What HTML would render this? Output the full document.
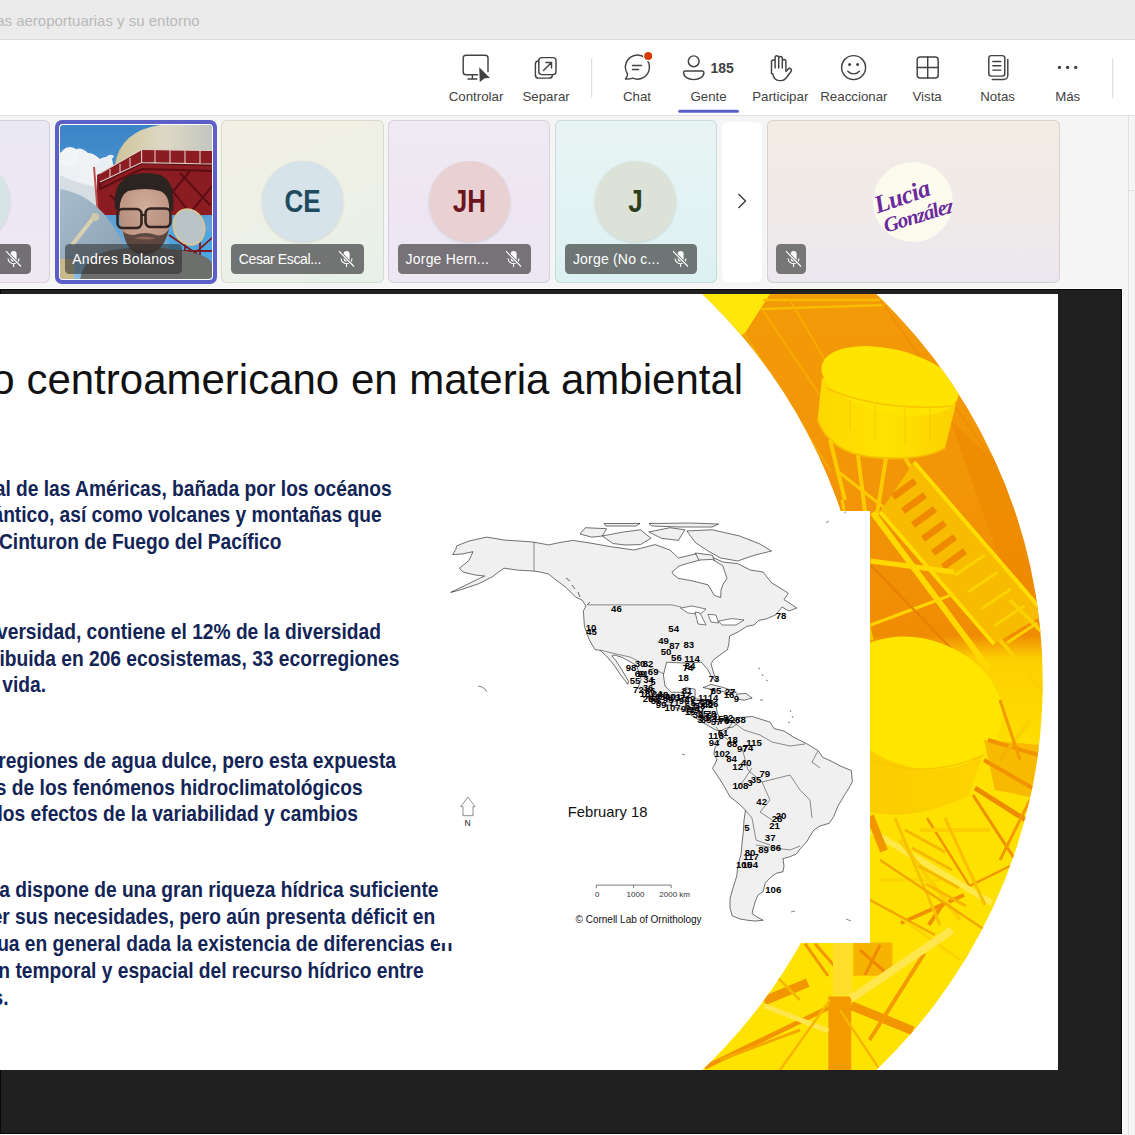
<!DOCTYPE html>
<html><head><meta charset="utf-8">
<style>
*{margin:0;padding:0;box-sizing:border-box}
html,body{width:1135px;height:1135px;overflow:hidden;background:#f5f5f5;font-family:"Liberation Sans",sans-serif}
.a{position:absolute}
.t{position:absolute;line-height:0;white-space:nowrap}
#titlebar{left:0;top:0;width:1135px;height:40px;background:#ebebeb;border-bottom:1px solid #dadada}
#toolbar{left:0;top:40px;width:1135px;height:76px;background:#fff;border-bottom:1px solid #e1e1e1}
.lbl{font-size:13.3px;color:#424242;margin-top:.8px}
.tile{position:absolute;top:120.3px;height:163.2px;border-radius:6px;overflow:hidden}
.av{position:absolute;width:81px;height:81px;border-radius:50%;top:40.6px;box-shadow:0 1px 3px rgba(0,0,0,.12)}
.avt{position:absolute;left:0;width:81px;top:41px;line-height:0;text-align:center;font-size:31px;transform:scaleX(.84)}
.pill{position:absolute;top:123.7px;height:29.7px;border-radius:4.5px}
.nm{position:absolute;left:7.6px;top:15px;line-height:0;font-size:14px;letter-spacing:-.35px;color:#fff;white-space:nowrap}
.mic{position:absolute;top:6px;width:18px;height:18px}
.body{font-size:22px;font-weight:700;color:#132456;transform:scaleX(.872);transform-origin:100% 0}
</style></head><body>
<!-- title bar -->
<div id="titlebar" class="a"></div>
<div class="t" style="right:935.4px;top:20.6px;font-size:15px;color:#b9b9b9">as aeroportuarias y su entorno</div>

<!-- toolbar -->
<div id="toolbar" class="a"></div>
<svg class="a" style="left:0;top:0" width="1135" height="116" viewBox="0 0 1135 116">
 <g fill="none" stroke="#424242" stroke-width="1.45" stroke-linecap="round" stroke-linejoin="round">
  <!-- Controlar -->
  <path d="M477.6 74.7H466a2.8 2.8 0 0 1-2.8-2.8V58.1a2.8 2.8 0 0 1 2.8-2.8H485.2a2.8 2.8 0 0 1 2.8 2.8V71.6"/>
  <path d="M468 79H476.8M472.4 74.7V79"/>
  <!-- Separar -->
  <rect x="538.8" y="57.6" width="17.2" height="17" rx="3"/>
  <path d="M538.6 60.9a3.2 3.2 0 0 0-3.2 3.2V74.9a3.2 3.2 0 0 0 3.2 3.2H549.2a3.2 3.2 0 0 0 3.2-3.2"/>
  <path d="M543.5 70.5l8-8M546 62.5h5.5v5.5"/>
  <!-- Chat -->
  <path d="M625.5 79c1.5-2 2.3-3.6 2-5.2a12 12 0 1 1 5.2 4.3c-2.3.9-4.7 1-7.2.9z"/>
  <path d="M632.5 65.5h9M632.5 69.5h6"/>
  <!-- Gente -->
  <circle cx="693.7" cy="61.3" r="5.4"/>
  <path d="M685.2 71h17.1a1.6 1.6 0 0 1 1.6 1.6c0 4.2-4.3 7-10.15 7s-10.15-2.8-10.15-7a1.6 1.6 0 0 1 1.6-1.6z"/>
  <!-- Participar hand -->
  <path d="M771.5 73.5V61.8a1.8 1.8 0 0 1 3.6 0V68V57.6a1.8 1.8 0 0 1 3.6 0V68V58.2a1.8 1.8 0 0 1 3.6 0V68V61.2a1.8 1.8 0 0 1 3.6 0V71.5l2.4-2.6a1.9 1.9 0 0 1 2.9 2.4l-5.3 7a6 6 0 0 1-4.8 2.3h-1.6a6.5 6.5 0 0 1-6.5-6.5z"/>
  <!-- Reaccionar -->
  <circle cx="853.6" cy="67.6" r="12"/>
  <path d="M847.8 71.2c3 3.6 8.6 3.6 11.6 0"/>
  <!-- Vista -->
  <rect x="917.2" y="57" width="21" height="21" rx="3"/>
  <path d="M927.7 57v21M917.2 67.5h21"/>
  <!-- Notas -->
  <rect x="988.8" y="55.6" width="16" height="20.5" rx="2.5"/>
  <path d="M992.8 61.5h8M992.8 65.8h8M992.8 70.1h8M1007.8 59.5v16a4 4 0 0 1-4 4h-11.5"/>
 </g>
 <g fill="#424242">
  <path d="M479.2 67.2L490 78.1L484.8 78.3L479.8 82Z"/>
  <circle cx="849.6" cy="64.6" r="1.5"/><circle cx="857.6" cy="64.6" r="1.5"/><circle cx="1059.5" cy="67.4" r="1.7"/><circle cx="1067.6" cy="67.4" r="1.7"/><circle cx="1075.7" cy="67.4" r="1.7"/>
 </g>
 <circle cx="648.2" cy="56" r="4.6" fill="#d83b01" stroke="#fff" stroke-width="1.2"/>
 <rect x="591.2" y="58.4" width="1" height="39.5" fill="#d6d6d6"/>
 <rect x="1112.2" y="58.4" width="1" height="39.5" fill="#d6d6d6"/>
 <rect x="678.2" y="109.8" width="60.7" height="3" rx="1.5" fill="#5b5fc7"/>
</svg>
<div class="t lbl" style="left:426px;width:100px;text-align:center;top:96.2px">Controlar</div>
<div class="t lbl" style="left:496.1px;width:100px;text-align:center;top:96.2px">Separar</div>
<div class="t lbl" style="left:587px;width:100px;text-align:center;top:96.2px">Chat</div>
<div class="t lbl" style="left:658.6px;width:100px;text-align:center;top:96.2px">Gente</div>
<div class="t" style="left:710.5px;top:67.6px;font-size:14px;font-weight:700;color:#424242">185</div>
<div class="t lbl" style="left:730.25px;width:100px;text-align:center;top:96.2px">Participar</div>
<div class="t lbl" style="left:803.9px;width:100px;text-align:center;top:96.2px">Reaccionar</div>
<div class="t lbl" style="left:877.1px;width:100px;text-align:center;top:96.2px">Vista</div>
<div class="t lbl" style="left:947.6px;width:100px;text-align:center;top:96.2px">Notas</div>
<div class="t lbl" style="left:1017.7px;width:100px;text-align:center;top:96.2px">Más</div>

<!-- right sidebar line -->
<div class="a" style="left:1128px;top:116px;width:1px;height:1019px;background:#e0e0e0"></div>
<div class="a" style="left:1128px;top:190px;width:7px;height:1px;background:#e0e0e0"></div>

<!-- PARTICIPANTS -->
<div class="tile" style="left:-111.9px;width:162.3px;background:linear-gradient(180deg,#eae8f4 0%,#ece7f3 60%,#efe9f2 100%);box-shadow:inset 0 0 0 1px rgba(150,130,160,.25)">
<div class="av" style="left:40.8px;background:#d6e4e6"></div>
<div class="pill" style="left:9.8px;width:133px;background:#737075"><svg class="mic" width="18" height="18" viewBox="0 0 18 18" style="left:106.9px"><rect x="5.7" y="0.9" width="5.9" height="10.7" rx="2.95" fill="#fff"/><path d="M3.1 8.4a5.45 5.3 0 0 0 10.9 0M8.55 13.7v3.2" stroke="#fff" stroke-width="1.15" fill="none"/><path d="M1 1.2L16 16.5" stroke="#737075" stroke-width="2.8"/><path d="M1 1.2L16 16.5" stroke="#fff" stroke-width="1.15"/></svg></div></div>
<div class="a" style="left:55px;top:120.2px;width:161.9px;height:163.5px;border-radius:7px;background:#5b5fc7"></div>
<div class="a" style="left:59px;top:124.2px;width:153.9px;height:155.5px;border-radius:4px;background:#fff"></div>
<div id="andres" class="a" style="left:59.9px;top:124.9px;width:152.4px;height:154.3px;border-radius:4px;overflow:hidden;background:linear-gradient(180deg,#4b8fcb 0%,#5fa0d3 40%,#8fb9d8 100%)">
<svg class="a" style="left:0;top:0" width="153" height="155" viewBox="0 0 153 155">
<defs>
 <linearGradient id="sky" x1="0" y1="0" x2="0" y2="1"><stop offset="0" stop-color="#3a84c6"/><stop offset=".6" stop-color="#5aa0d6"/><stop offset="1" stop-color="#8cbde0"/></linearGradient>
 <linearGradient id="dome" x1="0" y1="0" x2="1" y2="0"><stop offset="0" stop-color="#cfc499"/><stop offset=".5" stop-color="#ddd8c4"/><stop offset="1" stop-color="#c2c6c0"/></linearGradient>
 <linearGradient id="dish" x1="0" y1="0" x2="1" y2="1"><stop offset="0" stop-color="#a8bccb"/><stop offset="1" stop-color="#8aa2b6"/></linearGradient>
 <radialGradient id="face" cx=".5" cy=".4" r=".6"><stop offset="0" stop-color="#d4b09e"/><stop offset="1" stop-color="#b98f7c"/></radialGradient>
</defs>
<rect width="153" height="155" fill="url(#sky)"/>
<path d="M0 28Q6 22 12 26Q20 20 28 28Q36 30 40 34Q46 30 52 34Q56 48 54 70L48 84Q24 82 0 80Z" fill="#eef1f4"/><circle cx="10" cy="32" r="10" fill="#f2f4f6"/><circle cx="28" cy="40" r="12" fill="#eef2f5"/><circle cx="44" cy="44" r="9" fill="#e9eef2"/>
<path d="M0 50Q20 60 40 62L52 72L48 84Q24 84 0 82Z" fill="#d6dde3"/>
<path d="M46 32Q50 28 54 31Q52 36 46 34Z" fill="#e8edf2"/>
<path d="M55 40Q60 6 100 0H153V40Z" fill="url(#dome)"/>
<path d="M37 50L82 25L153 26V90H37Z" fill="#8b1c22"/>
<path d="M40 58L82 38L153 40V46L82 44L40 64ZM50 70L70 90M70 60L100 88M100 50L130 88M120 48L150 80M60 88L90 50M95 88L130 46M130 88L153 60" stroke="#5a0e14" stroke-width="2" fill="none"/>
<path d="M40 48.6L81.6 24L152 25.2M40 57L81.6 37.6L152 39M50 44V53M60 39V48M70 33V42M81.6 24V37.6M95 24.5V38M110 24.5V38.5M125 25V38.5M140 25V39" stroke="#ddccc6" stroke-width="1.1" fill="none"/>
<path d="M34 42L38 90" stroke="#c05050" stroke-width="2"/>
<path d="M0 64Q40 70 64 120L62 137L0 137Z" fill="url(#dish)"/>
<path d="M12 120L34 92" stroke="#d9d0b0" stroke-width="4"/>
<circle cx="35" cy="92" r="4" fill="#cfc7a8"/>
<path d="M0 134H14V155H0Z" fill="#c8b98c"/>
<path d="M109 106H153V146H109Z" fill="#4ea6de"/>
<path d="M109 110L153 140M115 146L153 112M125 106L125 146M140 106L140 146M109 126H153" stroke="#7a1a22" stroke-width="1.8" fill="none"/>
<ellipse cx="129" cy="102" rx="15" ry="18" transform="rotate(-20 129 102)" fill="#b9c4c8" stroke="#d2c69c" stroke-width="2.2"/>
<path d="M20 155Q24 128 60 124Q84 120 110 124Q150 128 153 140V155Z" fill="#6d6f6d"/>
<path d="M60 72Q58 110 70 122Q84 130 100 122Q112 108 111 72Q100 58 84 60Q66 58 60 72Z" fill="url(#face)"/>
<path d="M63 106Q66 128 84 130Q104 128 109 104Q104 112 96 110Q86 106 74 110Q66 110 63 106Z" fill="#4b3a33" opacity=".85"/>
<path d="M74 113Q84 110 96 113Q88 116 74 113Z" fill="#8e6457"/>
<path d="M55 84Q52 56 72 50Q86 46 100 50Q116 56 113 86L109 86Q110 70 100 66Q86 62 68 66Q60 70 59 86Z" fill="#2c2420"/>
<rect x="57.5" y="84" width="24" height="19" rx="5" fill="#b08a7a" stroke="#33241f" stroke-width="2.6" fill-opacity=".35"/>
<rect x="85.5" y="83.5" width="25" height="18.5" rx="5" fill="#b08a7a" stroke="#33241f" stroke-width="2.6" fill-opacity=".35"/>
<path d="M81.5 90H85.5" stroke="#33241f" stroke-width="2"/>
</svg>
<div class="pill" style="left:5.1px;top:119.1px;width:117px;background:rgba(40,40,40,.55)"><div class="nm" style="left:7.3px;letter-spacing:.25px">Andres Bolanos</div></div></div>
<div class="tile" style="left:221.3px;width:162.3px;background:linear-gradient(160deg,#f2f0e4 0%,#eef0e6 50%,#e6f1ea 100%);box-shadow:inset 0 0 0 1px rgba(150,150,130,.25)">
<div class="av" style="left:40.6px;background:#d6e3ea"><div class="avt" style="color:#1f4b5e;font-weight:700">CE</div></div>
<div class="pill" style="left:9.8px;width:132.9px;background:#727473"><div class="nm">Cesar Escal...</div><svg class="mic" width="18" height="18" viewBox="0 0 18 18" style="left:106.9px"><rect x="5.7" y="0.9" width="5.9" height="10.7" rx="2.95" fill="#fff"/><path d="M3.1 8.4a5.45 5.3 0 0 0 10.9 0M8.55 13.7v3.2" stroke="#fff" stroke-width="1.15" fill="none"/><path d="M1 1.2L16 16.5" stroke="#727473" stroke-width="2.8"/><path d="M1 1.2L16 16.5" stroke="#fff" stroke-width="1.15"/></svg></div></div>
<div class="tile" style="left:388.2px;width:162.3px;background:linear-gradient(180deg,#f0eaf3 0%,#ede6f2 60%,#ebe7f3 100%);box-shadow:inset 0 0 0 1px rgba(150,130,160,.25)">
<div class="av" style="left:40.6px;background:#e9d1d3"><div class="avt" style="color:#6a1520;font-weight:700">JH</div></div>
<div class="pill" style="left:9.8px;width:132.9px;background:#767277"><div class="nm" style="letter-spacing:.2px">Jorge Hern...</div><svg class="mic" width="18" height="18" viewBox="0 0 18 18" style="left:106.9px"><rect x="5.7" y="0.9" width="5.9" height="10.7" rx="2.95" fill="#fff"/><path d="M3.1 8.4a5.45 5.3 0 0 0 10.9 0M8.55 13.7v3.2" stroke="#fff" stroke-width="1.15" fill="none"/><path d="M1 1.2L16 16.5" stroke="#767277" stroke-width="2.8"/><path d="M1 1.2L16 16.5" stroke="#fff" stroke-width="1.15"/></svg></div></div>
<div class="tile" style="left:555px;width:161.6px;background:linear-gradient(180deg,#e9f4f4 0%,#e2f2f3 60%,#ddf1f2 100%);box-shadow:inset 0 0 0 1px rgba(120,150,150,.25)">
<div class="av" style="left:40.3px;background:#dde2d9"><div class="avt" style="color:#2b3e1e;font-weight:700">J</div></div>
<div class="pill" style="left:10.3px;width:131.7px;background:#6d7575"><div class="nm" style="letter-spacing:.2px">Jorge (No c...</div><svg class="mic" width="18" height="18" viewBox="0 0 18 18" style="left:106.9px"><rect x="5.7" y="0.9" width="5.9" height="10.7" rx="2.95" fill="#fff"/><path d="M3.1 8.4a5.45 5.3 0 0 0 10.9 0M8.55 13.7v3.2" stroke="#fff" stroke-width="1.15" fill="none"/><path d="M1 1.2L16 16.5" stroke="#6d7575" stroke-width="2.8"/><path d="M1 1.2L16 16.5" stroke="#fff" stroke-width="1.15"/></svg></div></div>
<div class="a" style="left:722.2px;top:121.9px;width:39.6px;height:159.7px;border-radius:6px;background:#fff"></div>
<svg class="a" style="left:735px;top:190px" width="14" height="22" viewBox="0 0 14 22"><path d="M3.5 4l7 7-7 7" fill="none" stroke="#333" stroke-width="1.3"/></svg>
<div class="tile" style="left:766.5px;width:293px;background:linear-gradient(180deg,#f3ece4 0%,#efeae9 60%,#ebe7ef 100%);box-shadow:inset 0 0 0 1px rgba(150,130,120,.25)">
<div class="av" style="left:106.2px;top:41.3px;width:80.4px;height:80.4px;background:#fdfaee;box-shadow:none;overflow:hidden"><div class="t" style="left:2px;top:44px;font-family:'Liberation Serif',serif;font-style:italic;font-weight:700;font-size:25px;color:#6a2a9c;transform:rotate(-19deg);transform-origin:0 0;letter-spacing:-.5px">Lucia</div>
<div class="t" style="left:11px;top:64px;font-family:'Liberation Serif',serif;font-style:italic;font-weight:700;font-size:21px;color:#6a2a9c;transform:rotate(-17deg);transform-origin:0 0;letter-spacing:-1px">González</div></div>
<div class="pill" style="left:9.5px;width:30px;background:#767676"><svg class="mic" width="18" height="18" viewBox="0 0 18 18" style="left:9px"><rect x="5.7" y="0.9" width="5.9" height="10.7" rx="2.95" fill="#fff"/><path d="M3.1 8.4a5.45 5.3 0 0 0 10.9 0M8.55 13.7v3.2" stroke="#fff" stroke-width="1.15" fill="none"/><path d="M1 1.2L16 16.5" stroke="#767676" stroke-width="2.8"/><path d="M1 1.2L16 16.5" stroke="#fff" stroke-width="1.15"/></svg></div></div>

<!-- STAGE -->
<div class="a" style="left:0;top:288px;width:1123px;height:846.5px;background:#fff"></div>
<div class="a" style="left:0;top:289px;width:1122px;height:844.5px;background:#202020;box-shadow:inset 0 0 0 1px #080808"></div>
<div id="slide" class="a" style="left:0;top:294px;width:1058px;height:776px;background:#fff;overflow:hidden">
<svg class="a" style="left:0;top:0" width="1058" height="776" viewBox="0 294 1058 776">
<defs>
 <clipPath id="cc"><path d="M421.6 154A535 535 0 1 1 421.6 1210A535.3 535.3 0 0 0 421.6 154Z"/></clipPath>
 <linearGradient id="cg" x1="0" y1="294" x2="0" y2="1070" gradientUnits="userSpaceOnUse">
  <stop offset="0" stop-color="#f39a08"/><stop offset=".25" stop-color="#f29506"/><stop offset=".44" stop-color="#f08c04"/><stop offset=".47" stop-color="#fcd000"/><stop offset=".6" stop-color="#ffe000"/><stop offset="1" stop-color="#ffe300"/>
 </linearGradient>
 <linearGradient id="dg" x1="0" y1="0" x2="1" y2="0">
  <stop offset="0" stop-color="#fdd800"/><stop offset=".5" stop-color="#ffe200"/><stop offset="1" stop-color="#fbd000"/>
 </linearGradient>
 <linearGradient id="dg2" x1="0" y1="0" x2="1" y2="0">
  <stop offset="0" stop-color="#fccc00"/><stop offset="1" stop-color="#fdd400"/>
 </linearGradient>
</defs>
<g clip-path="url(#cc)">
 <rect x="600" y="294" width="460" height="776" fill="url(#cg)"/>
 <!-- top-left yellow triangle -->
 <path d="M690 294H770L744 334.5H690Z" fill="#ffe70a"/>
 <!-- top beams -->
 <path d="M763 300H890M760 309L885 305" stroke="#f9bc00" stroke-width="2.5" fill="none"/>
 <path d="M763 311L824 401M790 300L860 420M744 333L830 470" stroke="#f7b000" stroke-width="1.8" fill="none" opacity=".8"/>
 <path d="M880 300L1000 470M900 310L960 330" stroke="#ee8800" stroke-width="2" fill="none" opacity=".6"/>
 <!-- right darker band upper -->
 <path d="M950 420L1060 520V640L1000 560Z" fill="#ec8600" opacity=".55"/>
 <!-- upper drum body -->
 <path d="M822 378L817.6 420Q830 452 870 457Q920 462 945 448L956 404Z" fill="url(#dg)"/>
 <path d="M817.6 420Q830 452 870 457Q920 462 945 448" stroke="#f6be00" stroke-width="2" fill="none"/>
 <ellipse cx="890" cy="381" rx="70" ry="32" transform="rotate(13 890 381)" fill="#ffe400"/>
 <path d="M826 388Q880 412 954 406" stroke="#f8c400" stroke-width="1.5" fill="none"/>
 <path d="M850 400V430M875 405V440M905 408V445M930 406V440" stroke="#f6c000" stroke-width="1" fill="none" opacity=".7"/>
 <!-- legs under drum -->
 <path d="M830 440L845 500M858 455L866 520M886 458L876 520M905 458L935 505" stroke="#fcca00" stroke-width="4" fill="none"/>
 <path d="M836 470L900 520" stroke="#fcca00" stroke-width="3" fill="none"/>
 <!-- stairs band -->
 <path d="M880 512L914 462L1045 614L994 644Z" fill="#f7bb00"/>
 <g stroke="#ef8a00" stroke-width="7" fill="none">
  <path d="M893 497l22-16M903 511l22-16M913 525l22-16M923 539l22-16M933 553l22-16M943 567l22-16"/>
 </g>
 <g stroke="#fbd200" stroke-width="3" fill="none">
  <path d="M955 575l30-20M968 592l30-20M981 609l30-20M994 626l30-20M1007 643l30-20"/>
 </g>
 <path d="M880 512L994 644M914 462L1045 614" stroke="#ffdd00" stroke-width="4" fill="none"/>
 <!-- upper beams -->
 <path d="M872.7 512.5L989 669" stroke="#ffd800" stroke-width="6" fill="none"/>
 <path d="M870.5 561L954 572" stroke="#ffd800" stroke-width="5" fill="none"/>
 <path d="M870.5 625L954 594" stroke="#ffd400" stroke-width="3" fill="none"/>
 <path d="M870.5 565L972 670" stroke="#e88000" stroke-width="2.5" fill="none"/>
 <path d="M842 500L872 640" stroke="#fcc800" stroke-width="3" fill="none"/>
 <path d="M1000 640L1050 700M1010 600L1050 640" stroke="#fbd000" stroke-width="4" fill="none"/>
 <!-- lower drum -->
 <path d="M860 700L870 812Q914 822 969 795.5L998 711Z" fill="url(#dg2)"/>
 <ellipse cx="918" cy="703" rx="86" ry="64" transform="rotate(18 918 703)" fill="#ffe500"/>
 <path d="M870 760Q929 780 984 755" stroke="#f9c800" stroke-width="1.5" fill="none"/>
 <!-- right side lattice near lower drum -->
 <path d="M988 740L1038 755M984 760L1036 790" stroke="#ef8c00" stroke-width="4" fill="none"/>
 <path d="M975 788L1025 819.6" stroke="#ee8a00" stroke-width="5" fill="none"/>
 <path d="M973 795L1014 858" stroke="#f09000" stroke-width="3" fill="none"/>
 <path d="M927 818L969.5 886L1010 866" stroke="#f29600" stroke-width="2.5" fill="none"/>
 <path d="M901 923L964 895M943.6 902.8L928.8 925" stroke="#f09000" stroke-width="4" fill="none"/>
 <path d="M870.5 830.7L991.7 902.8" stroke="#ffe94a" stroke-width="6" fill="none"/>
 <path d="M870 816L884 851" stroke="#f29600" stroke-width="8" fill="none"/>
 <path d="M900 840L960 920M920 830L990 830M1000 760L1030 720" stroke="#fbcf00" stroke-width="4" fill="none"/>
 <path d="M880 880L940 880M890 910L960 960" stroke="#fcd400" stroke-width="3" fill="none"/>
 <!-- bottom lattice -->
 <path d="M853.5 942.6H892.4V975.8H853.5Z" fill="#f6b400"/>
 <path d="M860 950L885 972M880 945L865 975" stroke="#ee8a00" stroke-width="3" fill="none"/>
 <path d="M805 943.7L828 976M815 943.7L838 970" stroke="#f29600" stroke-width="3" fill="none"/>
 <path d="M832.9 943H852.3V996.4H832.9Z" fill="#ffdf2a"/>
 <path d="M828.3 996.4H851.2V1070H828.3Z" fill="#f39a00"/>
 <path d="M704.6 1067.5L828.3 1007.9" stroke="#f29400" stroke-width="4.6" fill="none"/>
 <path d="M764 1001L807.7 982.7" stroke="#f29600" stroke-width="9" fill="none"/>
 <path d="M851.2 1005.6L913 1030.8" stroke="#f29600" stroke-width="9" fill="none"/>
 <path d="M869.5 1040L924.5 953" stroke="#f29a00" stroke-width="4" fill="none"/>
 <path d="M851 998.7L952 930" stroke="#ffe64d" stroke-width="8" fill="none"/>
 <path d="M764 1005.6L828.3 1030.8" stroke="#ffe64d" stroke-width="5" fill="none"/>
 <path d="M780 1070L830 1000M880 1070L840 1010M760 960L800 1000M900 1060L960 980" stroke="#f7b600" stroke-width="2.5" fill="none"/>
 <!-- extra lower lattice -->
 <path d="M984 740L1040 745L1045 800L995 790Z" fill="#f29a00" opacity=".55"/>
 <g stroke="#f5b400" stroke-width="3" fill="none" opacity=".9">
  <path d="M905 830l40 22M912 848l40 22M919 866l40 22M926 884l40 22"/>
 </g>
 <path d="M895 818L940 925M945 818L985 905" stroke="#f8c000" stroke-width="3" fill="none"/>
 <path d="M880 860L1000 940M870 900L935 935" stroke="#f3a800" stroke-width="2.5" fill="none"/>
 <path d="M1000 860L1030 800M1020 760L1000 700" stroke="#f29a00" stroke-width="3" fill="none"/>
 <path d="M700 1040L760 1000M720 1060L800 1030" stroke="#f4a800" stroke-width="3" fill="none"/>
</g>
</svg>
<div class="t" style="right:314.9px;top:86.45px;font-size:42px;color:#111">Contexto centroamericano en materia ambiental</div>
<div class="t body" style="right:666.2px;top:194.78px">Centroamérica es el puente natural de las Américas, bañada por los océanos</div>
<div class="t body" style="right:676.5px;top:221.38px">Pacífico y Atlántico, así como volcanes y montañas que</div>
<div class="t body" style="right:776.9px;top:247.98px">forman parte del Cinturon de Fuego del Pacífico</div>
<div class="t body" style="right:677.1px;top:337.88px">Es una región de gran biodiversidad, contiene el 12% de la diversidad</div>
<div class="t body" style="right:658.7px;top:364.58px">biológica mundial distribuida en 206 ecosistemas, 33 ecorregiones</div>
<div class="t body" style="right:1011.5px;top:391.38px">y 7 zonas de vida.</div>
<div class="t body" style="right:661.6px;top:467.08px">Cuenta con 17 ecorregiones de agua dulce, pero esta expuesta</div>
<div class="t body" style="right:695.5px;top:493.58px">a los efectos de los fenómenos hidroclimatológicos</div>
<div class="t body" style="right:700.0px;top:520.18px">extremos y a los efectos de la variabilidad y cambios</div>
<div class="t body" style="right:619.3px;top:595.78px">Centroamérica dispone de una gran riqueza hídrica suficiente</div>
<div class="t body" style="right:623.3px;top:623.08px">para satisfacer sus necesidades, pero aún presenta déficit en</div>
<div class="t body" style="right:605.1px;top:650.38px">el acceso al agua en general dada la existencia de diferencias en</div>
<div class="t body" style="right:633.9px;top:677.38px">la distribución temporal y espacial del recurso hídrico entre</div>
<div class="t body" style="right:1049.9px;top:703.78px">países.</div>
<div class="a" style="left:438.4px;top:217.3px;width:431.6px;height:431.6px;background:#fff"></div>
<svg class="a" style="left:0;top:0" width="1058" height="776" viewBox="0 294 1058 776"><path d="M456.5 545.9 L469.0 541.0 L486.5 537.1 L504.0 540.0 L533.0 542.0 L548.5 544.9 L560.0 542.5 L572.7 540.4 L590.0 543.0 L610.8 546.7 L634.0 550.0 L655.0 544.6 L670.0 550.0 L678.4 558.0 L695.0 554.0 L712.0 557.0 L722.8 562.0 L737.6 563.6 L750.3 570.0 L763.0 572.0 L771.5 582.7 L788.4 593.2 L784.0 599.6 L796.8 608.0 L789.0 611.0 L782.0 607.0 L776.0 614.7 L766.0 619.0 L758.5 620.5 L754.0 625.0 L747.0 626.3 L738.0 632.0 L729.5 636.0 L729.0 643.0 L727.5 649.6 L720.0 655.0 L714.0 659.3 L711.0 663.8 L714.2 674.9 L717.3 681.2 L712.0 678.0 L708.0 670.0 L701.5 662.2 L682.5 663.0 L666.6 662.2 L663.4 674.9 L665.0 686.0 L671.4 692.3 L682.5 692.3 L685.6 687.6 L695.1 689.2 L695.1 698.7 L711.0 700.3 L715.8 703.4 L717.3 713.0 L720.5 719.3 L730.0 722.5 L738.0 719.3 L739.0 722.0 L733.0 727.0 L726.9 728.0 L720.0 731.0 L715.8 730.0 L707.8 725.6 L695.1 717.7 L682.5 709.8 L663.4 703.4 L647.6 697.0 L638.0 687.6 L641.2 679.6 L636.5 665.4 L622.2 657.4 L614.3 655.0 L611.9 655.9 L615.9 660.6 L622.0 670.0 L628.5 681.2 L627.8 684.4 L620.6 674.9 L614.3 665.4 L606.3 655.9 L600.0 650.3 L595.0 649.6 L589.3 639.9 L584.4 626.3 L583.4 610.8 L586.0 606.0 L582.0 600.0 L575.7 597.2 L566.0 587.5 L556.0 580.0 L548.5 574.0 L540.0 572.0 L533.0 571.0 L517.5 570.1 L504.0 568.2 L492.0 577.0 L478.8 583.7 L460.0 590.0 L450.7 592.4 L470.0 583.0 L484.6 576.0 L475.0 575.0 L463.0 572.0 L459.4 568.2 L469.0 560.4 L473.0 551.7 L462.0 554.0 L452.6 554.6 L456.0 549.0Z M733.0 722.0 L739.0 717.6 L752.2 716.5 L760.0 719.0 L769.8 722.0 L774.2 728.6 L784.0 731.0 L794.0 737.4 L807.2 744.0 L818.2 750.7 L822.6 757.3 L831.0 761.0 L840.3 766.0 L851.3 770.5 L852.4 781.5 L849.0 788.0 L844.7 794.7 L838.0 806.0 L833.7 816.7 L829.2 823.3 L820.0 826.0 L813.8 830.0 L810.0 836.0 L807.2 841.0 L800.0 849.0 L796.2 854.2 L789.0 857.0 L783.0 858.6 L784.0 866.0 L783.0 871.8 L777.0 873.0 L772.0 876.2 L768.0 880.0 L765.4 882.8 L764.0 888.0 L763.2 891.6 L758.0 895.0 L756.6 898.2 L755.0 902.0 L754.4 904.8 L753.0 909.0 L752.2 913.7 L757.0 917.0 L763.2 920.3 L755.0 921.0 L747.8 920.3 L740.0 919.0 L732.3 915.9 L730.0 908.0 L730.1 898.2 L733.0 888.0 L736.7 876.2 L738.0 865.0 L741.1 854.2 L742.0 843.0 L743.3 832.2 L744.0 820.0 L745.5 810.1 L738.0 803.0 L730.1 796.9 L724.0 786.0 L716.9 774.9 L712.5 768.3 L715.0 764.0 L716.9 759.5 L714.0 754.0 L714.7 748.5 L718.0 742.0 L721.3 737.4 L726.0 731.0Z" fill="#f0f0f0" stroke="#000" stroke-width=".55" stroke-linejoin="round"/>
<path d="M580.0 534.0 L585.4 527.7 L606.5 528.7 L602.3 536.0 L591.7 537.2Z" fill="#f0f0f0" stroke="#000" stroke-width=".55"/>
<path d="M602.3 536.0 L623.4 532.0 L640.4 529.8 L651.0 538.3 L640.4 544.6 L625.0 545.0 L612.9 543.5Z" fill="#f0f0f0" stroke="#000" stroke-width=".55"/>
<path d="M648.8 532.0 L670.0 527.7 L684.8 529.8 L678.4 540.4 L661.5 538.3Z" fill="#f0f0f0" stroke="#000" stroke-width=".55"/>
<path d="M686.9 530.9 L712.3 529.8 L739.7 536.0 L760.0 544.0 L771.5 551.0 L754.5 555.2 L737.6 561.0 L720.7 558.0 L708.0 551.0 L695.3 542.5Z" fill="#f0f0f0" stroke="#000" stroke-width=".55"/>
<path d="M695.3 553.0 L712.3 555.2 L714.4 560.5 L699.6 561.5Z" fill="#f0f0f0" stroke="#000" stroke-width=".55"/>
<path d="M604.0 523.5 L640.0 523.5 L636.0 526.0 L606.0 526.0Z" fill="#f0f0f0" stroke="#000" stroke-width=".55"/>
<path d="M649.0 523.5 L690.0 523.0 L718.6 524.0 L712.0 527.0 L680.0 527.0 L652.0 526.0Z" fill="#f0f0f0" stroke="#000" stroke-width=".55"/>
<path d="M703.0 687.6 L711.0 684.4 L723.7 687.6 L736.4 692.3 L726.9 692.3 L711.0 689.2Z" fill="#f0f0f0" stroke="#000" stroke-width=".55"/>
<path d="M736.4 694.0 L746.0 693.5 L752.2 698.0 L744.0 700.3 L738.0 699.0Z" fill="#f0f0f0" stroke="#000" stroke-width=".55"/>
<path d="M673.0 574.2 L672.0 572.0 L679.0 566.0 L686.9 563.6 L700.0 560.0 L712.3 559.4 L722.8 565.8 L727.0 578.4 L722.8 584.8 L721.0 590.0 L720.7 597.5 L714.4 595.4 L708.0 584.8 L691.0 580.6 L678.4 578.4Z" fill="#fff" stroke="#000" stroke-width=".55"/>
<path d="M680.5 608.0 L692.0 606.0 L706.0 609.0 L700.0 614.4 L688.0 613.0Z" fill="#fff" stroke="#000" stroke-width=".5"/>
<path d="M695.0 612.0 L700.0 613.0 L706.0 625.0 L698.0 624.0Z" fill="#fff" stroke="#000" stroke-width=".5"/>
<path d="M708.0 614.4 L716.0 615.0 L718.6 623.0 L711.0 622.0Z" fill="#fff" stroke="#000" stroke-width=".5"/>
<path d="M718.6 621.0 L732.0 618.6 L744.0 620.0 L736.0 625.0 L722.0 625.0Z" fill="#fff" stroke="#000" stroke-width=".5"/>
<path d="M534 542V571M587.5 604.9H672L681 607M600 650L616 654L630 657L642 663L652 668L664 674M716 727L722 735L728 740M742 748L748 770L762 782L770 800L760 812L772 820M745 810L752 818L756 840L770 845M762 782L790 775L800 790L810 800L812 818M756 845L775 848L790 850L800 846M752 768L744 780L736 790M733 722L744 730L760 735L772 742L790 746L805 744M818 751L812 762L820 768" fill="none" stroke="#222" stroke-width=".5"/>
<path d="M572 585l3 4M566 578l4 3M578 592l2 5M590 602l-3 3" fill="none" stroke="#000" stroke-width=".6"/>
<path d="M758 668l2 1M762 674l1 2M766 680l2 1M760 700l3 0M790 710l1 2M792 716l1 2M788 722l2 1" fill="none" stroke="#333" stroke-width=".6"/>
<text x="616.4" y="611.9" text-anchor="middle" font-family="Liberation Sans" font-weight="700" font-size="9.6" fill="#000">46</text>
<text x="781" y="618.9" text-anchor="middle" font-family="Liberation Sans" font-weight="700" font-size="9.6" fill="#000">78</text>
<text x="591" y="631.4" text-anchor="middle" font-family="Liberation Sans" font-weight="700" font-size="9.6" fill="#000">10</text>
<text x="591.5" y="635.1999999999999" text-anchor="middle" font-family="Liberation Sans" font-weight="700" font-size="9.6" fill="#000">45</text>
<text x="673.7" y="632.1" text-anchor="middle" font-family="Liberation Sans" font-weight="700" font-size="9.6" fill="#000">54</text>
<text x="663.6" y="643.6999999999999" text-anchor="middle" font-family="Liberation Sans" font-weight="700" font-size="9.6" fill="#000">49</text>
<text x="674.5" y="648.6999999999999" text-anchor="middle" font-family="Liberation Sans" font-weight="700" font-size="9.6" fill="#000">87</text>
<text x="688.8" y="647.6" text-anchor="middle" font-family="Liberation Sans" font-weight="700" font-size="9.6" fill="#000">83</text>
<text x="666" y="654.6" text-anchor="middle" font-family="Liberation Sans" font-weight="700" font-size="9.6" fill="#000">50</text>
<text x="676.4" y="661.1999999999999" text-anchor="middle" font-family="Liberation Sans" font-weight="700" font-size="9.6" fill="#000">56</text>
<text x="692" y="662.4" text-anchor="middle" font-family="Liberation Sans" font-weight="700" font-size="9.6" fill="#000">114</text>
<text x="688" y="670.8" text-anchor="middle" font-family="Liberation Sans" font-weight="700" font-size="9.6" fill="#000">74</text>
<text x="690" y="669.4" text-anchor="middle" font-family="Liberation Sans" font-weight="700" font-size="9.6" fill="#000">84</text>
<text x="640" y="667.0" text-anchor="middle" font-family="Liberation Sans" font-weight="700" font-size="9.6" fill="#000">30</text>
<text x="648" y="667.0" text-anchor="middle" font-family="Liberation Sans" font-weight="700" font-size="9.6" fill="#000">82</text>
<text x="631" y="670.8" text-anchor="middle" font-family="Liberation Sans" font-weight="700" font-size="9.6" fill="#000">98</text>
<text x="640" y="677.0" text-anchor="middle" font-family="Liberation Sans" font-weight="700" font-size="9.6" fill="#000">69</text>
<text x="643" y="677.4" text-anchor="middle" font-family="Liberation Sans" font-weight="700" font-size="9.6" fill="#000">91</text>
<text x="653.2" y="675.1" text-anchor="middle" font-family="Liberation Sans" font-weight="700" font-size="9.6" fill="#000">69</text>
<text x="683.4" y="680.9" text-anchor="middle" font-family="Liberation Sans" font-weight="700" font-size="9.6" fill="#000">18</text>
<text x="635" y="684.0" text-anchor="middle" font-family="Liberation Sans" font-weight="700" font-size="9.6" fill="#000">55</text>
<text x="648.5" y="682.9" text-anchor="middle" font-family="Liberation Sans" font-weight="700" font-size="9.6" fill="#000">34</text>
<text x="653" y="685.4" text-anchor="middle" font-family="Liberation Sans" font-weight="700" font-size="9.6" fill="#000">5</text>
<text x="714" y="682.4" text-anchor="middle" font-family="Liberation Sans" font-weight="700" font-size="9.6" fill="#000">73</text>
<text x="638.4" y="693.4" text-anchor="middle" font-family="Liberation Sans" font-weight="700" font-size="9.6" fill="#000">72</text>
<text x="648" y="691.4" text-anchor="middle" font-family="Liberation Sans" font-weight="700" font-size="9.6" fill="#000">36</text>
<text x="687" y="694.1" text-anchor="middle" font-family="Liberation Sans" font-weight="700" font-size="9.6" fill="#000">81</text>
<text x="716" y="694.1" text-anchor="middle" font-family="Liberation Sans" font-weight="700" font-size="9.6" fill="#000">65</text>
<text x="712" y="695.4" text-anchor="middle" font-family="Liberation Sans" font-weight="700" font-size="9.6" fill="#000">7</text>
<text x="730" y="695.3" text-anchor="middle" font-family="Liberation Sans" font-weight="700" font-size="9.6" fill="#000">27</text>
<text x="729" y="698.4" text-anchor="middle" font-family="Liberation Sans" font-weight="700" font-size="9.6" fill="#000">16</text>
<text x="736.5" y="701.8" text-anchor="middle" font-family="Liberation Sans" font-weight="700" font-size="9.6" fill="#000">9</text>
<text x="645" y="697.4" text-anchor="middle" font-family="Liberation Sans" font-weight="700" font-size="9.6" fill="#000">18</text>
<text x="655" y="700.4" text-anchor="middle" font-family="Liberation Sans" font-weight="700" font-size="9.6" fill="#000">10</text>
<text x="665" y="700.4" text-anchor="middle" font-family="Liberation Sans" font-weight="700" font-size="9.6" fill="#000">30</text>
<text x="676" y="700.4" text-anchor="middle" font-family="Liberation Sans" font-weight="700" font-size="9.6" fill="#000">01</text>
<text x="686" y="698.4" text-anchor="middle" font-family="Liberation Sans" font-weight="700" font-size="9.6" fill="#000">12</text>
<text x="690" y="702.4" text-anchor="middle" font-family="Liberation Sans" font-weight="700" font-size="9.6" fill="#000">29</text>
<text x="703" y="700.9" text-anchor="middle" font-family="Liberation Sans" font-weight="700" font-size="9.6" fill="#000">11</text>
<text x="713" y="700.9" text-anchor="middle" font-family="Liberation Sans" font-weight="700" font-size="9.6" fill="#000">14</text>
<text x="713" y="707.4" text-anchor="middle" font-family="Liberation Sans" font-weight="700" font-size="9.6" fill="#000">86</text>
<text x="654" y="702.4" text-anchor="middle" font-family="Liberation Sans" font-weight="700" font-size="9.6" fill="#000">52</text>
<text x="668" y="703.4" text-anchor="middle" font-family="Liberation Sans" font-weight="700" font-size="9.6" fill="#000">95</text>
<text x="661" y="707.6999999999999" text-anchor="middle" font-family="Liberation Sans" font-weight="700" font-size="9.6" fill="#000">99</text>
<text x="672.6" y="710.8" text-anchor="middle" font-family="Liberation Sans" font-weight="700" font-size="9.6" fill="#000">107</text>
<text x="690" y="709.4" text-anchor="middle" font-family="Liberation Sans" font-weight="700" font-size="9.6" fill="#000">63</text>
<text x="708" y="708.4" text-anchor="middle" font-family="Liberation Sans" font-weight="700" font-size="9.6" fill="#000">42</text>
<text x="700" y="712.4" text-anchor="middle" font-family="Liberation Sans" font-weight="700" font-size="9.6" fill="#000">47</text>
<text x="694" y="713.4" text-anchor="middle" font-family="Liberation Sans" font-weight="700" font-size="9.6" fill="#000">59</text>
<text x="703" y="717.4" text-anchor="middle" font-family="Liberation Sans" font-weight="700" font-size="9.6" fill="#000">25</text>
<text x="711" y="717.4" text-anchor="middle" font-family="Liberation Sans" font-weight="700" font-size="9.6" fill="#000">78</text>
<text x="706" y="723.4" text-anchor="middle" font-family="Liberation Sans" font-weight="700" font-size="9.6" fill="#000">35</text>
<text x="718" y="722.4" text-anchor="middle" font-family="Liberation Sans" font-weight="700" font-size="9.6" fill="#000">15</text>
<text x="730" y="723.4" text-anchor="middle" font-family="Liberation Sans" font-weight="700" font-size="9.6" fill="#000">62</text>
<text x="724" y="724.4" text-anchor="middle" font-family="Liberation Sans" font-weight="700" font-size="9.6" fill="#000">76</text>
<text x="740.4" y="723.1999999999999" text-anchor="middle" font-family="Liberation Sans" font-weight="700" font-size="9.6" fill="#000">88</text>
<text x="716" y="738.6999999999999" text-anchor="middle" font-family="Liberation Sans" font-weight="700" font-size="9.6" fill="#000">116</text>
<text x="723" y="736.4" text-anchor="middle" font-family="Liberation Sans" font-weight="700" font-size="9.6" fill="#000">61</text>
<text x="714" y="746.4" text-anchor="middle" font-family="Liberation Sans" font-weight="700" font-size="9.6" fill="#000">94</text>
<text x="754" y="745.6" text-anchor="middle" font-family="Liberation Sans" font-weight="700" font-size="9.6" fill="#000">115</text>
<text x="732.6" y="743.4" text-anchor="middle" font-family="Liberation Sans" font-weight="700" font-size="9.6" fill="#000">18</text>
<text x="732" y="747.4" text-anchor="middle" font-family="Liberation Sans" font-weight="700" font-size="9.6" fill="#000">68</text>
<text x="742.3" y="752.1999999999999" text-anchor="middle" font-family="Liberation Sans" font-weight="700" font-size="9.6" fill="#000">97</text>
<text x="748" y="751.4" text-anchor="middle" font-family="Liberation Sans" font-weight="700" font-size="9.6" fill="#000">74</text>
<text x="722.2" y="757.3" text-anchor="middle" font-family="Liberation Sans" font-weight="700" font-size="9.6" fill="#000">102</text>
<text x="731.5" y="761.9" text-anchor="middle" font-family="Liberation Sans" font-weight="700" font-size="9.6" fill="#000">84</text>
<text x="737.7" y="770.1" text-anchor="middle" font-family="Liberation Sans" font-weight="700" font-size="9.6" fill="#000">12</text>
<text x="746.2" y="766.1999999999999" text-anchor="middle" font-family="Liberation Sans" font-weight="700" font-size="9.6" fill="#000">40</text>
<text x="764.8" y="776.6999999999999" text-anchor="middle" font-family="Liberation Sans" font-weight="700" font-size="9.6" fill="#000">79</text>
<text x="740.4" y="788.6999999999999" text-anchor="middle" font-family="Liberation Sans" font-weight="700" font-size="9.6" fill="#000">108</text>
<text x="750" y="786.4" text-anchor="middle" font-family="Liberation Sans" font-weight="700" font-size="9.6" fill="#000">3</text>
<text x="756" y="783.1999999999999" text-anchor="middle" font-family="Liberation Sans" font-weight="700" font-size="9.6" fill="#000">35</text>
<text x="761.7" y="804.6" text-anchor="middle" font-family="Liberation Sans" font-weight="700" font-size="9.6" fill="#000">42</text>
<text x="777" y="822.4" text-anchor="middle" font-family="Liberation Sans" font-weight="700" font-size="9.6" fill="#000">28</text>
<text x="781" y="819.4" text-anchor="middle" font-family="Liberation Sans" font-weight="700" font-size="9.6" fill="#000">20</text>
<text x="774.5" y="829.0" text-anchor="middle" font-family="Liberation Sans" font-weight="700" font-size="9.6" fill="#000">21</text>
<text x="747" y="830.9" text-anchor="middle" font-family="Liberation Sans" font-weight="700" font-size="9.6" fill="#000">5</text>
<text x="770.2" y="840.6" text-anchor="middle" font-family="Liberation Sans" font-weight="700" font-size="9.6" fill="#000">37</text>
<text x="775.7" y="851.1" text-anchor="middle" font-family="Liberation Sans" font-weight="700" font-size="9.6" fill="#000">86</text>
<text x="763.6" y="853.4" text-anchor="middle" font-family="Liberation Sans" font-weight="700" font-size="9.6" fill="#000">89</text>
<text x="750" y="856.4" text-anchor="middle" font-family="Liberation Sans" font-weight="700" font-size="9.6" fill="#000">80</text>
<text x="751" y="860.4" text-anchor="middle" font-family="Liberation Sans" font-weight="700" font-size="9.6" fill="#000">117</text>
<text x="744" y="867.6999999999999" text-anchor="middle" font-family="Liberation Sans" font-weight="700" font-size="9.6" fill="#000">105</text>
<text x="750" y="867.6999999999999" text-anchor="middle" font-family="Liberation Sans" font-weight="700" font-size="9.6" fill="#000">104</text>
<text x="773.3" y="892.5" text-anchor="middle" font-family="Liberation Sans" font-weight="700" font-size="9.6" fill="#000">106</text>
<text x="650" y="694.4" text-anchor="middle" font-family="Liberation Sans" font-weight="700" font-size="9.6" fill="#000">86</text><text x="657" y="697.4" text-anchor="middle" font-family="Liberation Sans" font-weight="700" font-size="9.6" fill="#000">24</text><text x="663" y="698.4" text-anchor="middle" font-family="Liberation Sans" font-weight="700" font-size="9.6" fill="#000">48</text><text x="670" y="700.4" text-anchor="middle" font-family="Liberation Sans" font-weight="700" font-size="9.6" fill="#000">40</text><text x="680" y="701.4" text-anchor="middle" font-family="Liberation Sans" font-weight="700" font-size="9.6" fill="#000">37</text><text x="648" y="702.4" text-anchor="middle" font-family="Liberation Sans" font-weight="700" font-size="9.6" fill="#000">20</text><text x="656" y="704.4" text-anchor="middle" font-family="Liberation Sans" font-weight="700" font-size="9.6" fill="#000">38</text><text x="684" y="704.4" text-anchor="middle" font-family="Liberation Sans" font-weight="700" font-size="9.6" fill="#000">90</text><text x="696" y="706.4" text-anchor="middle" font-family="Liberation Sans" font-weight="700" font-size="9.6" fill="#000">57</text><text x="705" y="705.4" text-anchor="middle" font-family="Liberation Sans" font-weight="700" font-size="9.6" fill="#000">66</text><text x="700" y="709.4" text-anchor="middle" font-family="Liberation Sans" font-weight="700" font-size="9.6" fill="#000">58</text><text x="690" y="715.4" text-anchor="middle" font-family="Liberation Sans" font-weight="700" font-size="9.6" fill="#000">15</text><text x="698" y="718.4" text-anchor="middle" font-family="Liberation Sans" font-weight="700" font-size="9.6" fill="#000">39</text><text x="704" y="721.4" text-anchor="middle" font-family="Liberation Sans" font-weight="700" font-size="9.6" fill="#000">31</text><text x="712" y="719.4" text-anchor="middle" font-family="Liberation Sans" font-weight="700" font-size="9.6" fill="#000">53</text><text x="716" y="725.4" text-anchor="middle" font-family="Liberation Sans" font-weight="700" font-size="9.6" fill="#000">57</text><text x="728" y="721.4" text-anchor="middle" font-family="Liberation Sans" font-weight="700" font-size="9.6" fill="#000">82</text><text x="700" y="723.4" text-anchor="middle" font-family="Liberation Sans" font-weight="700" font-size="9.6" fill="#000">3</text><text x="686" y="712.4" text-anchor="middle" font-family="Liberation Sans" font-weight="700" font-size="9.6" fill="#000">92</text><text x="674" y="706.4" text-anchor="middle" font-family="Liberation Sans" font-weight="700" font-size="9.6" fill="#000">71</text>
<text x="567.7" y="816.9" font-family="Liberation Sans" font-size="14.8" fill="#111">February 18</text>
<path d="M467.8 797.1L475 806.6H473V815.7H463V806.6H460.7Z" fill="#fff" stroke="#444" stroke-width=".6"/>
<text x="467.5" y="825.7" text-anchor="middle" font-family="Liberation Sans" font-size="8.6" fill="#222">N</text>
<path d="M596.3 888.2V885.1H671.2V888.2M633.6 885.1V888.2" fill="none" stroke="#444" stroke-width=".7"/>
<text x="597.2" y="896.6" text-anchor="middle" font-family="Liberation Sans" font-size="8" fill="#333">0</text>
<text x="635.5" y="896.6" text-anchor="middle" font-family="Liberation Sans" font-size="8" fill="#333">1000</text>
<text x="659.3" y="896.6" font-family="Liberation Sans" font-size="8" fill="#333">2000 km</text>
<text x="575.6" y="922.7" font-family="Liberation Sans" font-size="10" fill="#111" textLength="126">© Cornell Lab of Ornithology</text>
<path d="M478 686l4 1 3 2 2 3M682 754l3 1M845 511.5l.1 2M826 523l3-2M846 919l5 2M791 912l4-1" fill="none" stroke="#333" stroke-width=".6"/></svg>
</div>
</body></html>
